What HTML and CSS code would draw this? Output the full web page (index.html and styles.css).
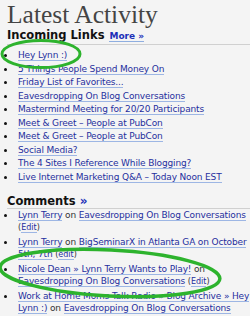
FILE: index.html
```html
<!DOCTYPE html>
<html lang="en">
<head>
    <meta charset="UTF-8">
    <title>Latest Activity</title>
    <link rel="stylesheet" href="styles.css">
</head>
<body>
    <div class="panel">
        <h1 class="title">Latest Activity</h1>

        <div class="section-head">
            <h2>Incoming Links</h2>
            <a href="#" class="more">More &raquo;</a>
        </div>
        <ul class="links">
            <li><a href="#">Hey Lynn :)</a></li>
            <li><a href="#">5 Things People Spend Money On</a></li>
            <li><a href="#">Friday List of Favorites...</a></li>
            <li><a href="#">Eavesdropping On Blog Conversations</a></li>
            <li><a href="#">Mastermind Meeting for 20/20 Participants</a></li>
            <li><a href="#">Meet &amp; Greet &ndash; People at PubCon</a></li>
            <li><a href="#">Meet &amp; Greet &ndash; People at PubCon</a></li>
            <li><a href="#">Social Media?</a></li>
            <li><a href="#">The 4 Sites I Reference While Blogging?</a></li>
            <li><a href="#">Live Internet Marketing Q&amp;A &ndash; Today Noon EST</a></li>
        </ul>

        <div class="section-head section-head-comments">
            <h2>Comments <a href="#" class="arrow">&raquo;</a></h2>
        </div>
        <ul class="comments">
            <li><a href="#">Lynn Terry</a> on <a href="#">Eavesdropping On Blog Conversations</a> <span class="edit">(<a href="#">Edit</a>)</span></li>
            <li><a href="#">Lynn Terry</a> on <a href="#">BigSeminarX in Atlanta GA on October 5th, 7th</a> <span class="edit">(<a href="#">edit</a>)</span></li>
            <li><a href="#">Nicole Dean &raquo; Lynn Terry Wants to Play!</a> on <a href="#">Eavesdropping On Blog Conversations</a> <span class="edit">(<a href="#">Edit</a>)</span></li>
            <li><a href="#">Work at Home Moms Talk Radio &raquo; Blog Archive &raquo; Hey Lynn :)</a> on <a href="#">Eavesdropping On Blog Conversations</a> <span class="edit">(<a href="#">Edit</a>)</span></li>
        </ul>

        <!-- обводки маркером поверх списка -->
        <svg class="marks" width="250" height="316" viewBox="0 0 250 316">
            <ellipse cx="41" cy="54" rx="39" ry="13.5" fill="none" stroke="#2db32d" stroke-width="3"/>
            <ellipse cx="110" cy="273" rx="110" ry="23" transform="rotate(3 110 273)" fill="none" stroke="#2db32d" stroke-width="3.5"/>
        </svg>
    </div>
</body>
</html>
```

FILE: styles.css
```css
/* Общие стили */
body {
    margin: 0;
    background: #f4f4f4;
    font-family: "DejaVu Sans", Verdana, sans-serif;
    color: #333;
    overflow: hidden;
}

.panel {
    position: relative;
    width: 250px;
    height: 316px;
    padding: 0 0 0 7px;
    box-sizing: border-box;
}

.title {
    margin: 0;
    padding-top: 1px;
    font-family: "Liberation Serif", "Times New Roman", serif;
    font-weight: normal;
    font-size: 25.5px;
    line-height: 27px;
    color: #444;
}

/* Заголовки секций */
.section-head {
    display: flex;
    align-items: baseline;
    gap: 5px;
    border-bottom: 1px solid #d0d0d0;
    padding-bottom: 2px;
}

.section-head h2 {
    margin: 0;
    font-size: 11.5px;
    line-height: 14px;
    color: #111;
}

.section-head-comments {
    padding-bottom: 0;
}

.more, .arrow {
    color: #1c2fb8;
    font-size: 9px;
    font-weight: bold;
    text-decoration: none;
    border-bottom: 1px solid #8faee0;
}

.arrow {
    font-size: 12px;
    border: none;
}

/* Списки */
ul {
    margin: 0;
    padding: 0;
    list-style: none;
    font-size: 9px;
    letter-spacing: -0.15px;
}

ul li {
    padding-left: 11px;
}

/* маленькая чёрная точка слева */
ul li::before {
    content: "";
    display: inline-block;
    width: 3px;
    height: 3px;
    margin: 0 11px 0 -14px;
    border-radius: 50%;
    background: #111;
    vertical-align: middle;
}

ul a {
    color: #1f2f9e;
    text-decoration: none;
    border-bottom: 1px solid #9db6e4;
}

.links {
    margin-top: 4px;
    margin-bottom: 10px;
}

.links li {
    line-height: 13.5px;
}

.comments li {
    line-height: 12px;
    margin-bottom: 2px;
}

.edit {
    font-size: 8px;
    letter-spacing: 0;
}

.marks {
    position: absolute;
    left: 0;
    top: 0;
    pointer-events: none;
}
```
